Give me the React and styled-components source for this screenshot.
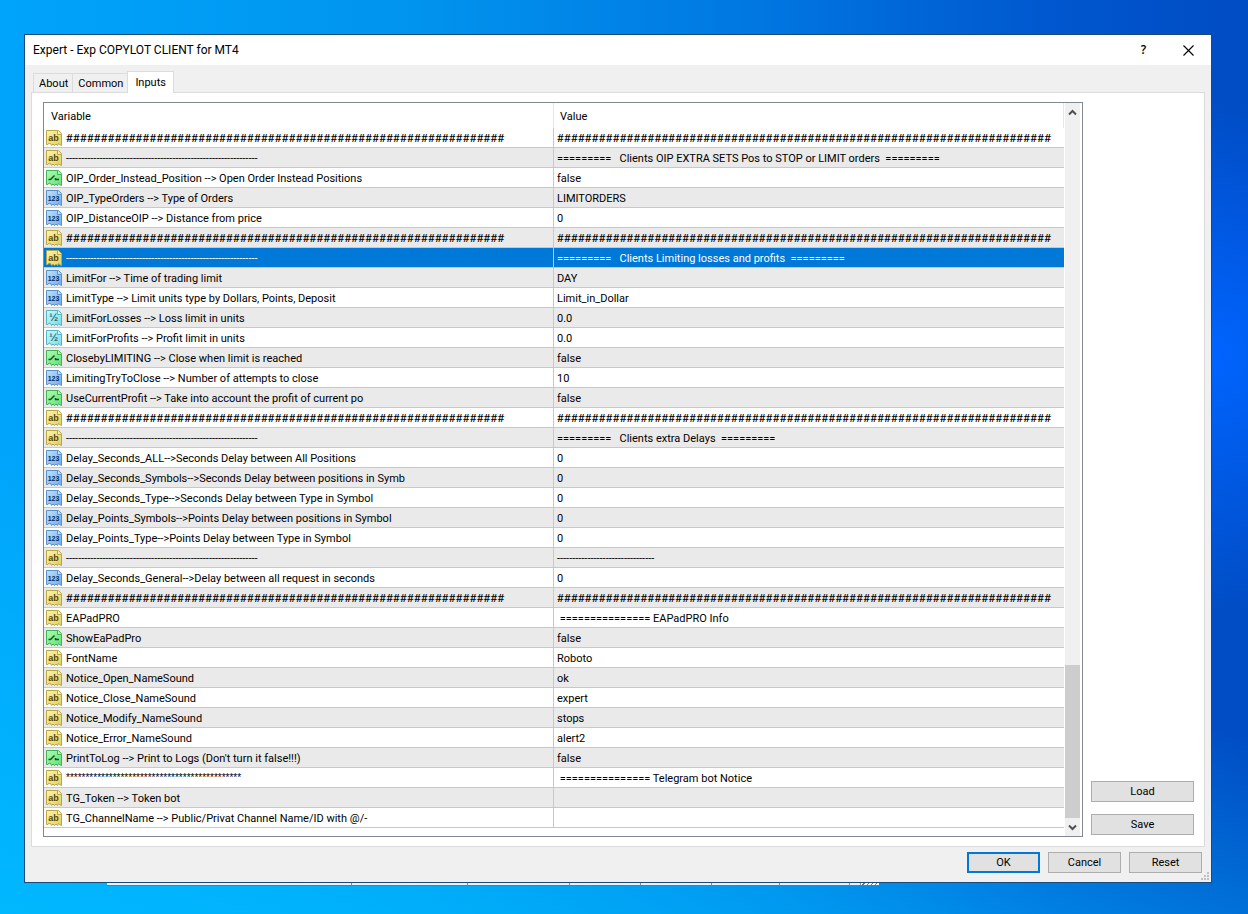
import React from "react";
import styled, { createGlobalStyle, css } from "styled-components";

const HASH_NAME = "#".repeat(63);
const HASH_VALUE = "#".repeat(71);
const DASHES = "-".repeat(63);

const inputs = [
    { type: "string", name: HASH_NAME, value: HASH_VALUE },
    { type: "string", name: DASHES, value: "=========   Clients OIP EXTRA SETS Pos to STOP or LIMIT orders  =========" },
    { type: "bool", name: "OIP_Order_Instead_Position --> Open Order Instead Positions", value: "false" },
    { type: "int", name: "OIP_TypeOrders --> Type of Orders", value: "LIMITORDERS" },
    { type: "int", name: "OIP_DistanceOIP --> Distance from price", value: "0" },
    { type: "string", name: HASH_NAME, value: HASH_VALUE },
    { type: "string", name: DASHES, value: "=========   Clients Limiting losses and profits  =========", selected: true },
    { type: "int", name: "LimitFor --> Time of trading limit", value: "DAY" },
    { type: "int", name: "LimitType --> Limit units type by Dollars, Points, Deposit", value: "Limit_in_Dollar" },
    { type: "double", name: "LimitForLosses --> Loss limit in units", value: "0.0" },
    { type: "double", name: "LimitForProfits --> Profit limit in units", value: "0.0" },
    { type: "bool", name: "ClosebyLIMITING --> Close when limit is reached", value: "false" },
    { type: "int", name: "LimitingTryToClose --> Number of attempts to close", value: "10" },
    { type: "bool", name: "UseCurrentProfit --> Take into account the profit of current po", value: "false" },
    { type: "string", name: HASH_NAME, value: HASH_VALUE },
    { type: "string", name: DASHES, value: "=========   Clients extra Delays  =========" },
    { type: "int", name: "Delay_Seconds_ALL-->Seconds Delay between All Positions", value: "0" },
    { type: "int", name: "Delay_Seconds_Symbols-->Seconds Delay between positions in Symb", value: "0" },
    { type: "int", name: "Delay_Seconds_Type-->Seconds Delay between Type in Symbol", value: "0" },
    { type: "int", name: "Delay_Points_Symbols-->Points Delay between positions in Symbol", value: "0" },
    { type: "int", name: "Delay_Points_Type-->Points Delay between Type in Symbol", value: "0" },
    { type: "string", name: DASHES, value: "-".repeat(32) },
    { type: "int", name: "Delay_Seconds_General-->Delay between all request in seconds", value: "0" },
    { type: "string", name: HASH_NAME, value: HASH_VALUE },
    { type: "string", name: "EAPadPRO", value: " =============== EAPadPRO Info" },
    { type: "bool", name: "ShowEaPadPro", value: "false" },
    { type: "string", name: "FontName", value: "Roboto" },
    { type: "string", name: "Notice_Open_NameSound", value: "ok" },
    { type: "string", name: "Notice_Close_NameSound", value: "expert" },
    { type: "string", name: "Notice_Modify_NameSound", value: "stops" },
    { type: "string", name: "Notice_Error_NameSound", value: "alert2" },
    { type: "bool", name: "PrintToLog --> Print to Logs (Don't turn it false!!!)", value: "false" },
    { type: "string", name: "*".repeat(45), value: " =============== Telegram bot Notice" },
    { type: "string", name: "TG_Token --> Token bot", value: "" },
    { type: "string", name: "TG_ChannelName --> Public/Privat Channel Name/ID with @/-", value: "" },
];

const iconColors = {
    string: { light: "#fbf4ac", dark: "#e0d060", edge: "#b8a648", ink: "#554600" },
    bool: { light: "#b0fbb0", dark: "#62e078", edge: "#44b058", ink: "#0b5a1c" },
    int: { light: "#bfe2ff", dark: "#6facea", edge: "#5c90c8", ink: "#0c2c5c" },
    double: { light: "#c8fafe", dark: "#78dce8", edge: "#58b2c2", ink: "#22707e" },
};

const glyphs = { string: "ab", int: "123", double: "½" };

const TypeIcon = ({ type }) => {
    const c = iconColors[type];
    return (
        <svg width="16" height="16" viewBox="0 0 16 16" aria-hidden="true">
            <defs>
                <linearGradient id={`paper-${type}`} x1="0" y1="0" x2="1" y2="1">
                    <stop offset="0" stopColor={c.light} />
                    <stop offset="1" stopColor={c.dark} />
                </linearGradient>
            </defs>
            <path
                d="M.5 .5H12.5L15.5 3.5V15.5L13.5 14.5L12.5 13.5L11.5 15.5L10 14L8.5 15.5L7 14L5.5 15.5L4.5 13.5L3 13L2 14.5H.5Z"
                fill={`url(#paper-${type})`}
                stroke={c.edge}
            />
            <path d="M11.5 .5V4.5H15.5" fill={c.light} stroke={c.edge} />
            {type === "bool" ? (
                <path d="M2.5 9.5H4.5L8.5 5.5M9.5 8V9.5H13" fill="none" stroke={c.ink} strokeWidth="1.5" />
            ) : (
                <IconText x="7.5" y="11" $type={type} fill={c.ink}>{glyphs[type]}</IconText>
            )}
        </svg>
    );
};

const Chevron = ({ up }) => (
    <svg width="9" height="7" viewBox="0 0 9 7" aria-hidden="true">
        <path d={up ? "M1 5.5L4.5 2L8 5.5" : "M1 1.5L4.5 5L8 1.5"} fill="none" stroke="#505050" strokeWidth="2" />
    </svg>
);

const App = () => {
    return (
        <Desktop>
            <GlobalStyle />
            <Dialog role="dialog" aria-label="Expert settings">
                <TitleBar>
                    <Title>Expert - Exp COPYLOT CLIENT for MT4</Title>
                    <CaptionButton aria-label="Help">
                        <HelpMark>?</HelpMark>
                    </CaptionButton>
                    <CaptionButton aria-label="Close">
                        <svg width="11" height="11" viewBox="0 0 11 11" aria-hidden="true">
                            <path d="M.5 .5L10.5 10.5M10.5 .5L.5 10.5" stroke="#000" strokeWidth="1.1" />
                        </svg>
                    </CaptionButton>
                </TitleBar>
                <Tabs role="tablist">
                    <Tab role="tab" aria-selected="false">About</Tab>
                    <Tab role="tab" aria-selected="false">Common</Tab>
                    <Tab role="tab" aria-selected="true" $active>Inputs</Tab>
                </Tabs>
                <Panel role="tabpanel">
                    <ListBox>
                        <Table>
                            <thead>
                                <tr>
                                    <HeadCell>Variable</HeadCell>
                                    <HeadCell>Value</HeadCell>
                                </tr>
                            </thead>
                            <tbody>
                                {inputs.map((input, i) => (
                                    <Row key={i} $selected={input.selected}>
                                        <Cell>
                                            <NameCell>
                                                <TypeIcon type={input.type} />
                                                <Text $fill={input.name[0]}>{input.name}</Text>
                                            </NameCell>
                                        </Cell>
                                        <Cell>
                                            <Text $fill={input.value[0]}>{input.value}</Text>
                                        </Cell>
                                    </Row>
                                ))}
                            </tbody>
                        </Table>
                        <ScrollBar>
                            <ScrollButton aria-label="Scroll up"><Chevron up /></ScrollButton>
                            <Track><Thumb /></Track>
                            <ScrollButton aria-label="Scroll down"><Chevron /></ScrollButton>
                        </ScrollBar>
                    </ListBox>
                    <SideButtons>
                        <Button $wide>Load</Button>
                        <Button $wide>Save</Button>
                    </SideButtons>
                </Panel>
                <Footer>
                    <Button $primary>OK</Button>
                    <Button>Cancel</Button>
                    <Button>Reset</Button>
                    <Grip width="8" height="8" viewBox="0 0 8 8" aria-hidden="true">
                        <path d="M6 0h2v2H6zM3 3h2v2H3zM6 3h2v2H6zM0 6h2v2H0zM3 6h2v2H3zM6 6h2v2H6z" fill="#bfbfbf" />
                    </Grip>
                </Footer>
            </Dialog>
            <StatusBar>
                <Pane /><Pane /><Pane /><Pane /><Pane /><Pane /><Pane /><Pane />
                <Hatch />
            </StatusBar>
        </Desktop>
    );
};

const GlobalStyle = createGlobalStyle`
    * {
        box-sizing: border-box;
    }
    body {
        margin: 0;
        font: 11px/14px Roboto, "Liberation Sans", sans-serif;
        color: #000;
    }
    button {
        font: inherit;
        color: inherit;
    }
`;

const Desktop = styled.div`
    min-height: 100vh;
    padding: 34px 36px 28px 24px;
    background:
        radial-gradient(circle at 97% 39%, #0064ff 0, rgba(0, 100, 255, 0) 19%),
        linear-gradient(14deg, rgba(0, 186, 255, 0.9) 0%, rgba(0, 186, 255, 0) 40%),
        linear-gradient(90deg, #00a4fb 0%, #0094ee 33%, #0078e2 60%, #0056ce 85%, #004cc4 100%);
`;

const Dialog = styled.div`
    border: 1px solid #1c4a78;
    background: #f0f0f0;
`;

const TitleBar = styled.div`
    display: flex;
    align-items: center;
    height: 30px;
    padding-left: 8px;
    background: #fff;
`;

const Title = styled.h1`
    flex: 1;
    margin: 0;
    font: 12px/16px Roboto, sans-serif;
`;

const CaptionButton = styled.button`
    display: flex;
    align-items: center;
    justify-content: center;
    width: 45px;
    height: 28px;
    padding: 0;
    border: 0;
    background: none;
`;

const HelpMark = styled.span`
    font: 600 12px/16px "Open Sans", sans-serif;
`;

const Tabs = styled.div`
    display: flex;
    align-items: flex-end;
    height: 27px;
    padding-left: 8px;
`;

const Tab = styled.button`
    height: 19px;
    padding: 2px 4px 0 5px;
    border: 1px solid #dcdcdc;
    border-bottom: 0;
    border-right-width: 0;
    background: #f0f0f0;
    ${({ $active }) => $active && css`
        z-index: 1;
        height: 22px;
        margin-bottom: -1px;
        padding: 0 7px;
        border-right-width: 1px;
        background: #fff;
    `}
`;

const Panel = styled.div`
    display: flex;
    gap: 8px;
    margin: 0 6px;
    padding: 9px 10px 9px 11px;
    border: 1px solid #dcdcdc;
    background: #fff;
`;

const ListBox = styled.div`
    display: flex;
    flex: 1;
    padding: 0 2px 8px 0;
    border: 1px solid #828790;
`;

const Table = styled.table`
    flex: 1;
    width: 100%;
    table-layout: fixed;
    border-collapse: separate;
    border-spacing: 0;
    margin-right: 1px;
`;

const HeadCell = styled.th`
    height: 25px;
    padding: 2px 6px 0;
    border-right: 1px solid #e5e5e5;
    font-weight: normal;
    text-align: left;
    &:first-child {
        padding: 2px 7px 0;
    }
`;

const Cell = styled.td`
    height: 20px;
    padding: 0 3px;
    border-bottom: 1px solid #c8c8c8;
    overflow: hidden;
    &:first-child {
        padding: 0 2px;
        border-right: 1px solid #c8c8c8;
    }
`;

const Row = styled.tr`
    &:nth-child(even) {
        background: #eaeaea;
    }
    ${({ $selected }) => $selected && css`
        background: #0078d7;
        color: #fff;
    `}
`;

const NameCell = styled.div`
    display: flex;
    align-items: center;
    gap: 4px;
    svg {
        flex: none;
    }
`;

/* separator rows are a single repeated character */
const Text = styled.span`
    display: block;
    padding-top: 2px;
    white-space: pre;
    ${({ $fill }) => $fill === "#" && css`
        padding-top: 0;
        font: 12px/14px Lato, sans-serif;
    `}
    ${({ $fill }) => $fill === "*" && css`
        padding-top: 0;
        font: 10px/14px "Liberation Sans", sans-serif;
    `}
`;

const iconFonts = {
    string: "bold 9px",
    int: "bold 7px",
    double: "bold 11px",
};

const IconText = styled.text`
    text-anchor: middle;
    font: ${({ $type }) => iconFonts[$type]} "Liberation Sans", sans-serif;
`;

const ScrollBar = styled.div`
    display: flex;
    flex-direction: column;
    width: 15px;
    margin-bottom: -8px;
    background: #f0f0f0;
`;

const ScrollButton = styled.button`
    display: flex;
    align-items: center;
    justify-content: center;
    height: 18px;
    padding: 0;
    border: 0;
    background: none;
`;

const Track = styled.div`
    display: flex;
    flex-direction: column;
    justify-content: flex-end;
    flex: 1;
`;

const Thumb = styled.div`
    height: 22%;
    background: #cdcdcd;
`;

const SideButtons = styled.div`
    display: flex;
    flex-direction: column;
    justify-content: flex-end;
    gap: 12px;
    padding-bottom: 2px;
`;

const Button = styled.button`
    width: ${({ $wide }) => ($wide ? "103px" : "73px")};
    height: 21px;
    padding: 1px 0 0;
    border: ${({ $primary }) => ($primary ? "2px solid #0078d7" : "1px solid #adadad")};
    background: #e1e1e1;
`;

const Footer = styled.div`
    position: relative;
    display: flex;
    justify-content: flex-end;
    gap: 8px;
    padding: 5px 9px 9px;
`;

const Grip = styled.svg`
    position: absolute;
    right: 2px;
    bottom: 2px;
`;

const StatusBar = styled.div`
    display: grid;
    grid-template-columns: 245fr 116fr 102fr 71fr 71fr 68fr 70fr 11fr 18fr;
    width: 65%;
    height: 3px;
    margin-left: 7%;
    border-bottom: 1px solid #5c7c94;
    background: #f0f0f0;
`;

const Pane = styled.div`
    border-right: 1px solid #8c8c8c;
`;

const Hatch = styled.div`
    background: repeating-linear-gradient(135deg, #fff 0 2px, #707070 2px 3px);
`;

export default App;
